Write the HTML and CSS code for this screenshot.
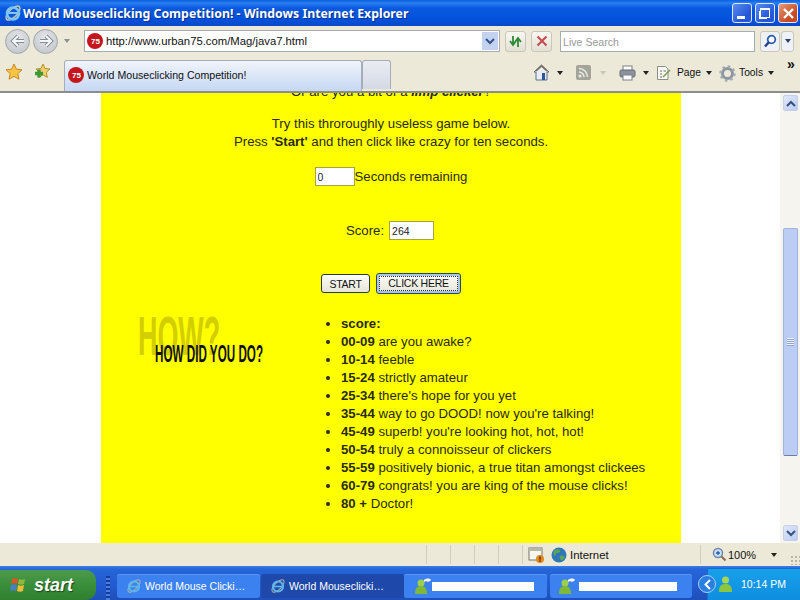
FILE: index.html
```html
<!DOCTYPE html>
<html lang="en">
<head>
    <meta charset="UTF-8">
    <title>World Mouseclicking Competition! - Windows Internet Explorer</title>
    <link rel="stylesheet" href="styles.css">
</head>
<body>
<div class="window">
    <!-- title bar -->
    <div class="titlebar">
        <svg class="ie-logo" width="20" height="20" viewBox="0 0 20 20"><ellipse cx="10" cy="10" rx="9" ry="4" fill="none" stroke="#c9c6a8" stroke-width="1.5" transform="rotate(-45 10 10)"/><circle cx="10" cy="10.500" r="6" fill="none" stroke="#7fc4f2" stroke-width="2.600"/><path d="M5 10h10" stroke="#7fc4f2" stroke-width="2"/></svg>
        <span class="title-text">World Mouseclicking Competition! - Windows Internet Explorer</span>
        <div class="win-buttons">
            <div class="win-btn"><span class="glyph-min"></span></div>
            <div class="win-btn"><span class="glyph-restore"></span></div>
            <div class="win-btn close"><svg width="13" height="13" viewBox="0 0 13 13"><path d="M2 2l9 9M11 2l-9 9" stroke="#fff" stroke-width="2.400"/></svg></div>
        </div>
    </div>

    <!-- address row -->
    <div class="nav-row">
        <div class="nav-circles">
            <div class="nav-circle"><svg width="16" height="14" viewBox="0 0 16 14"><path d="M8 2L3 7l5 5M3 7h11" fill="none" stroke="#868d94" stroke-width="4"/><path d="M8 2L3 7l5 5M3 7h11" fill="none" stroke="#f4f5f6" stroke-width="2"/></svg></div>
            <div class="nav-circle"><svg width="16" height="14" viewBox="0 0 16 14"><path d="M8 2l5 5-5 5M13 7H2" fill="none" stroke="#868d94" stroke-width="4"/><path d="M8 2l5 5-5 5M13 7H2" fill="none" stroke="#f4f5f6" stroke-width="2"/></svg></div>
        </div>
        <span class="arrow grey nav-arrow"></span>
        <div class="address">
            <svg class="favicon" width="16" height="16" viewBox="0 0 16 16"><circle cx="8" cy="8" r="8" fill="#c4161c"/><text x="8.500" y="11" text-anchor="middle" class="favicon-text">75</text></svg>
            <span class="url">http://www.urban75.com/Mag/java7.html</span>
            <div class="address-drop"><svg width="10" height="7" viewBox="0 0 10 7"><path d="M1 1l4 4 4-4" fill="none" stroke="#34508f" stroke-width="2"/></svg></div>
        </div>
        <div class="tool-btn first"><svg width="15" height="13" viewBox="0 0 15 13"><path d="M5 1v8M2 6l3 4 3-4M10 12V4M7 7l3-4 3 4" fill="none" stroke="#2d8a35" stroke-width="1.800"/></svg></div>
        <div class="tool-btn"><svg width="12" height="12" viewBox="0 0 12 12"><path d="M1.500 1.500l9 9M10.500 1.500l-9 9" stroke="#c8494a" stroke-width="2"/></svg></div>
        <div class="search-box">Live Search</div>
        <div class="tool-btn search-go"><svg width="14" height="14" viewBox="0 0 14 14"><circle cx="8.500" cy="5.500" r="3.800" fill="#fff" stroke="#2a5bb0" stroke-width="1.800"/><path d="M6 8l-4 4.500" stroke="#1d3f8c" stroke-width="2.400"/></svg></div>
        <div class="tool-btn search-drop"><span class="arrow navy"></span></div>
    </div>

    <!-- tab row -->
    <div class="tab-row">
        <svg class="star" width="18" height="18" viewBox="0 0 18 18"><path d="M9 1l2.400 5.200 5.600.6-4.200 3.800 1.200 5.600L9 13.400l-5 2.800 1.200-5.600L1 6.800l5.600-.6z" fill="#f6c445" stroke="#c98a1e"/></svg>
        <svg class="star-add" width="18" height="18" viewBox="0 0 18 18"><path d="M10 1l2 4.500 5 .5-3.700 3.300 1 5-4.300-2.500-4.300 2.500 1-5L3 6l5-.5z" fill="#f1cf6c" stroke="#b98f2a"/><path d="M6 6.500v8M2 10.500h8" stroke="#3c9a35" stroke-width="3.400"/></svg>
        <div class="tab active">
            <svg width="16" height="16" viewBox="0 0 16 16"><circle cx="8" cy="8" r="8" fill="#c4161c"/><text x="8.500" y="11" text-anchor="middle" class="favicon-text">75</text></svg>
            <span>World Mouseclicking Competition!</span>
        </div>
        <div class="tab blank"></div>
        <div class="commands">
            <svg class="cmd-home" width="17" height="17" viewBox="0 0 17 17"><path d="M8.500 1L1 8h2v8h11V8h2z" fill="#e8edf4" stroke="#5d6f8c"/><path d="M3 7l5.500-5L14 7" fill="none" stroke="#7a6a55" stroke-width="1.500"/><rect x="9" y="9" width="3" height="7" fill="#2f5597"/></svg>
            <span class="arrow cmd-arrow-home"></span>
            <svg class="cmd-rss" width="15" height="15" viewBox="0 0 15 15"><rect width="15" height="15" rx="2" fill="#a3a59c"/><circle cx="4" cy="11" r="1.500" fill="#ecebe2"/><path d="M3 7a5 5 0 0 1 5 5M3 3.500a8.500 8.500 0 0 1 8.500 8.500" fill="none" stroke="#ecebe2" stroke-width="1.500"/></svg>
            <span class="arrow pale cmd-arrow-rss"></span>
            <svg class="cmd-print" width="17" height="16" viewBox="0 0 17 16"><rect x="4" y="1" width="9" height="5" fill="#fff" stroke="#78808c"/><rect x="1" y="5" width="15" height="7" rx="1.500" fill="#8d939c" stroke="#646a74"/><rect x="4" y="10" width="9" height="5" fill="#fff" stroke="#78808c"/></svg>
            <span class="arrow cmd-arrow-print"></span>
            <svg class="cmd-page" width="16" height="16" viewBox="0 0 16 16"><path d="M1.500 1.500h8l2.500 2.500v10.500H1.500z" fill="#f8f8f2" stroke="#8b8f88"/><path d="M4 6h2M4 9h2M4 12h2M7.500 6H10" stroke="#6a6f6a"/><path d="M7 12l7-7" stroke="#7f9a57" stroke-width="1.600"/></svg>
            <span class="cmd-label">Page</span>
            <span class="arrow cmd-arrow-page"></span>
            <svg class="cmd-gear" width="17" height="17" viewBox="0 0 17 17"><circle cx="8.500" cy="8.500" r="5" fill="none" stroke="#8d95a0" stroke-width="3"/><circle cx="8.500" cy="8.500" r="7" fill="none" stroke="#a5abb4" stroke-width="2.500" stroke-dasharray="2.500 3"/></svg>
            <span class="cmd-label">Tools</span>
            <span class="arrow cmd-arrow-tools"></span>
            <span class="chevrons">»</span>
        </div>
    </div>

    <!-- page -->
    <div class="viewport">
        <div class="page-bg">
            <div class="page">
                <p class="intro">Or are you a bit of a <b><i>limp clicker</i></b>?</p>
                <p class="intro">Try this throroughly useless game below.<br>Press <b>'Start'</b> and then click like crazy for ten seconds.</p>
                <div class="game-row seconds">
                    <input class="field small" type="text" value="0"><span>Seconds remaining</span>
                </div>
                <div class="game-row score">
                    <span>Score:</span><input class="field" type="text" value="264">
                </div>
                <div class="game-row buttons">
                    <button class="btn">START</button>
                    <button class="btn focused"><span>CLICK HERE</span></button>
                </div>
                <div class="results">
                    <div class="how">
                        <span class="how-big">HOW?</span>
                        <span class="how-small">HOW DID YOU DO?</span>
                    </div>
                    <ul class="scores">
                        <li><b>score:</b></li>
                        <li><b>00-09</b> are you awake?</li>
                        <li><b>10-14</b> feeble</li>
                        <li><b>15-24</b> strictly amateur</li>
                        <li><b>25-34</b> there's hope for you yet</li>
                        <li><b>35-44</b> way to go DOOD! now you're talking!</li>
                        <li><b>45-49</b> superb! you're looking hot, hot, hot!</li>
                        <li><b>50-54</b> truly a connoisseur of clickers</li>
                        <li><b>55-59</b> positively bionic, a true titan amongst clickees</li>
                        <li><b>60-79</b> congrats! you are king of the mouse clicks!</li>
                        <li><b>80 +</b> Doctor!</li>
                    </ul>
                </div>
            </div>
        </div>
        <div class="scrollbar">
            <div class="sb-btn"><svg width="10" height="7" viewBox="0 0 10 7"><path d="M1 6l4-4 4 4" fill="none" stroke="#3b4f81" stroke-width="2"/></svg></div>
            <div class="sb-track top"></div>
            <div class="sb-thumb"><span class="sb-grip"></span></div>
            <div class="sb-track bottom"></div>
            <div class="sb-btn"><svg width="10" height="7" viewBox="0 0 10 7"><path d="M1 1l4 4 4-4" fill="none" stroke="#3b4f81" stroke-width="2"/></svg></div>
        </div>
    </div>

    <!-- status bar -->
    <div class="statusbar">
        <div class="status-cell wide"></div>
        <div class="status-cell"></div>
        <div class="status-cell"></div>
        <div class="status-cell"></div>
        <div class="status-cell zone">
            <svg width="16" height="16" viewBox="0 0 16 16"><rect x="1" y="1" width="13" height="12" fill="#f7f6ef" stroke="#77756a"/><rect x="1" y="1" width="13" height="3" fill="#b8b6a8"/><circle cx="12" cy="12" r="4" fill="#e08a1e"/><rect x="11.300" y="9.500" width="1.400" height="3.200" fill="#622"/><rect x="11.300" y="13.300" width="1.400" height="1.400" fill="#622"/></svg>
            <svg class="globe" width="16" height="16" viewBox="0 0 16 16"><circle cx="8" cy="8" r="7.500" fill="#2f78b8"/><path d="M3 4c2-2 5-2 6-1s-1 3-3 3-1 3-2 3-2-3-1-5zM9 9c2-1 4 0 5 1-1 2-3 4-4 3s-2-3-1-4z" fill="#5ba55a"/></svg>
            <span class="zone-label">Internet</span>
        </div>
        <div class="status-cell zoom">
            <svg width="15" height="15" viewBox="0 0 15 15"><circle cx="6" cy="6" r="4.500" fill="#cfe0f5" stroke="#6c86ad" stroke-width="1.500"/><path d="M4 6h4M6 4v4" stroke="#2a5bb0" stroke-width="1.300"/><path d="M9.500 9.500l4 4" stroke="#8a6a4a" stroke-width="2"/></svg>
            <span class="zoom-label">100%</span>
            <span class="arrow zoom-arrow"></span>
        </div>
        <span class="status-grip"></span>
    </div>

    <!-- taskbar -->
    <div class="taskbar">
        <div class="start">
            <svg width="18" height="18" viewBox="0 0 18 18"><path d="M2 3c2-1 4-1 6 0l-1 5c-2-1-4-1-6 0z" fill="#d8562a"/><path d="M9 3c2 1 4 1 6 0l-1 5c-2 1-4 1-6 0z" fill="#8cb83c"/><path d="M1 9c2-1 4-1 6 0l-1 6c-2-1-4-1-6 0z" fill="#4a7fc4"/><path d="M8 9c2 1 4 1 6 0l-1 6c-2 1-4 1-6 0z" fill="#edbd36"/></svg>
            <span>start</span>
        </div>
        <div class="task-grip"></div>
        <div class="task light">
            <svg class="task-ie" width="16" height="16" viewBox="0 0 16 16"><ellipse cx="8" cy="8" rx="8" ry="3.400" fill="none" stroke="#b5b29a" transform="rotate(-45 8 8)"/><circle cx="8" cy="8.500" r="5" fill="none" stroke="#5cb6ee" stroke-width="2.200"/><path d="M4 8.500h8" stroke="#5cb6ee" stroke-width="1.700"/></svg>
            <span>World Mouse Clicki…</span>
        </div>
        <div class="task pressed">
            <svg class="task-ie" width="16" height="16" viewBox="0 0 16 16"><ellipse cx="8" cy="8" rx="8" ry="3.400" fill="none" stroke="#b5b29a" transform="rotate(-45 8 8)"/><circle cx="8" cy="8.500" r="5" fill="none" stroke="#5cb6ee" stroke-width="2.200"/><path d="M4 8.500h8" stroke="#5cb6ee" stroke-width="1.700"/></svg>
            <span>World Mouseclicki…</span>
        </div>
        <div class="task light chat first-chat">
            <svg width="18" height="18" viewBox="0 0 18 18"><circle cx="7" cy="6" r="3.500" fill="#9ccf4a"/><path d="M1 17c0-7 3-8 6-8s6 1 6 8z" fill="#7eb83a"/><path d="M10 3c2-2 6-2 7 0-1 2-4 2-5 1l-2 1z" fill="#f4f4f4"/></svg>
            <span class="blanked one"></span>
        </div>
        <div class="task light chat second-chat">
            <svg width="18" height="18" viewBox="0 0 18 18"><circle cx="7" cy="6" r="3.500" fill="#9ccf4a"/><path d="M1 17c0-7 3-8 6-8s6 1 6 8z" fill="#7eb83a"/><path d="M10 3c2-2 6-2 7 0-1 2-4 2-5 1l-2 1z" fill="#f4f4f4"/></svg>
            <span class="blanked two"></span>
        </div>
        <div class="tray">
            <div class="tray-arrow"><svg width="9" height="11" viewBox="0 0 9 11"><path d="M7 1L2.500 5.500 7 10" fill="none" stroke="#fff" stroke-width="2"/></svg></div>
            <svg width="15" height="18" viewBox="0 0 15 18"><circle cx="7.500" cy="5" r="3.500" fill="#a8d652"/><path d="M1 17c0-7 3-8 6.500-8s6.500 1 6.500 8z" fill="#8cc63f"/></svg>
            <span class="clock">10:14 PM</span>
        </div>
    </div>
</div>
</body>
</html>
```

FILE: styles.css
```css
* { box-sizing: border-box; }
html, body { margin: 0; padding: 0; overflow: hidden; }
body { font-family: "Liberation Sans", Arial, sans-serif; }
.window { width: 800px; height: 600px; display: flex; flex-direction: column; background: #ece9d8; overflow: hidden; }

/* title bar */
.titlebar { height: 26px; display: flex; align-items: center; padding: 0 2px 0 3px; background: linear-gradient(#0a5fe0 0%, #2a80f0 12%, #0a5ae0 30%, #0452dc 75%, #0a48c8 100%); }
.ie-logo { flex: none; }
.title-text { font: bold 12.300px "Noto Sans", "Liberation Sans", sans-serif; color: #fff; text-shadow: 1px 1px 1px #0a2f90; white-space: nowrap; }
.win-buttons { margin-left: auto; display: flex; gap: 3px; }
.win-btn { width: 20px; height: 20px; border: 1px solid #dfe8fa; border-radius: 3px; background: linear-gradient(135deg, #5a8cf0, #2458d8 70%); display: flex; align-items: center; justify-content: center; }
.win-btn.close { background: linear-gradient(135deg, #e89a78, #c84a22 70%); }
.glyph-min { width: 8px; height: 3px; background: #fff; margin-top: 8px; margin-right: 2px; }
.glyph-restore { width: 10px; height: 10px; border: 1px solid #fff; border-top-width: 2px; box-shadow: -2px 2px 0 -1px #fff; }

/* nav row */
.nav-row { height: 30px; display: flex; align-items: center; background: #ece9d8; padding-left: 5px; }
.nav-circles { display: flex; width: 53px; height: 25px; gap: 3px; flex: none; }
.nav-circle { width: 25px; height: 25px; border-radius: 50%; border: 1px solid #a0a6ac; background: radial-gradient(circle at 50% 35%, #e6e8ea, #bcc1c6); display: flex; align-items: center; justify-content: center; }
.arrow { display: inline-block; width: 0; height: 0; border-left: 3.500px solid transparent; border-right: 3.500px solid transparent; border-top: 4px solid #222; flex: none; }
.arrow.grey { border-top-color: #8d8f90; }
.arrow.pale { border-top-color: #c8c6b8; }
.arrow.navy { border-top-color: #2c3c70; }
.nav-arrow { margin-left: 6px; }
.address { width: 416px; height: 22px; margin-left: 14px; border: 1px solid #a5acb2; background: #fff; display: flex; align-items: center; padding-left: 2px; flex: none; }
.favicon { flex: none; }
.favicon-text { font: bold 8px "Liberation Sans", sans-serif; fill: #fff; }
.url { margin-left: 3px; font: 11.300px "Liberation Sans", sans-serif; color: #111; white-space: nowrap; }
.address-drop { margin-left: auto; margin-right: 1px; width: 16px; height: 18px; background: #c3d2ee; display: flex; align-items: center; justify-content: center; }
.tool-btn { width: 21px; height: 21px; margin-left: 5px; border: 1px solid #c9c7ba; border-radius: 3px; background: linear-gradient(#f8f7f2, #e2e0d4); display: flex; align-items: center; justify-content: center; flex: none; }
.search-box { width: 195px; height: 21px; margin-left: 8px; border: 1px solid #a5acb2; background: #fff; color: #999; font: 10.600px "Liberation Sans", sans-serif; line-height: 21px; padding-left: 2px; flex: none; }
.search-go { margin-left: 5px; width: 20px; background: #eef1f6; }
.search-drop { margin-left: 1px; width: 13px; background: #eef1f6; }

/* tab row */
.tab-row { height: 36px; display: flex; align-items: flex-end; background: #ece9d8; border-bottom: 1px solid #8b8d90; padding-left: 64px; position: relative; }
.star { position: absolute; left: 5px; top: 7px; }
.star-add { position: absolute; left: 33px; top: 7px; }
.tab { height: 31px; border: 1px solid #a7adb8; border-bottom: none; border-radius: 3px 3px 0 0; flex: none; }
.tab.active { width: 298px; background: linear-gradient(#f0f4fa, #c6d8f5); display: flex; align-items: center; padding: 0 0 3px 3px; gap: 3px; font: 10.600px "Liberation Sans", sans-serif; color: #111; }
.tab.blank { width: 29px; height: 29px; margin-bottom: 2px; background: linear-gradient(#e9ecf2 0%, #d4d9e6 100%); }
.commands { position: absolute; left: 533px; top: 0; width: 267px; height: 35px; font: 10.300px "Liberation Sans", sans-serif; color: #111; }
.commands > * { position: absolute; }
.cmd-home { left: 0; top: 8px; }
.cmd-arrow-home { left: 24px; top: 15px; }
.cmd-rss { left: 43px; top: 9px; }
.cmd-arrow-rss { left: 67px; top: 15px; }
.cmd-print { left: 86px; top: 9px; }
.cmd-arrow-print { left: 110px; top: 15px; }
.cmd-page { left: 123px; top: 9px; }
.cmd-label { top: 11px; }
.cmd-page + .cmd-label { left: 144px; }
.cmd-arrow-page { left: 173px; top: 15px; }
.cmd-gear { left: 186px; top: 9px; }
.cmd-gear + .cmd-label { left: 206px; }
.cmd-arrow-tools { left: 235px; top: 15px; }
.chevrons { left: 254px; top: 0; font: bold 14px "Liberation Sans", sans-serif; }

/* page area */
.viewport { height: 451px; display: flex; background: #fff; overflow: hidden; border-top: 1px solid #8b8d90; }
.page-bg { width: 780px; flex: none; padding-left: 101px; overflow: hidden; }
.page { display: flow-root; width: 580px; height: 100%; background: #ff0; color: #2a2a10; font-size: 13.200px; line-height: 18px; text-align: center; }
.intro { margin: 0 0 14px; }
.intro:first-child { margin-top: -10px; }
.game-row { display: flex; justify-content: center; align-items: center; }
.seconds { margin-top: 16px; height: 19px; }
.seconds span { padding-top: 1px; }
.score { margin-top: 35px; height: 19px; gap: 5px; padding-right: 2px; }
.buttons { margin-top: 33px; height: 21px; gap: 6px; }
.field { width: 45px; height: 19px; border: 1px solid #a8a53c; background: #fff; font: 10.500px "Liberation Sans", sans-serif; color: #222; padding: 0 2px; margin: 0; }
.field.small { width: 40px; }
.btn { height: 19px; width: 49px; padding: 0; border: 1px solid #2b3a3a; border-radius: 3px; background: linear-gradient(#fdfdf8, #e6e5d8); font: 10.500px "Liberation Sans", sans-serif; letter-spacing: -0.250px; color: #111; }
.btn.focused { width: 85px; height: 21px; border-color: #2c4a50; box-shadow: inset 0 0 0 2px #a8c4ea; }
.btn.focused span { display: block; margin: 2px; line-height: 15px; outline: 1px dotted #333; outline-offset: -1px; }
.results { display: flex; align-items: flex-start; margin-top: 18px; text-align: left; padding-left: 37px; }
.how { position: relative; width: 125px; height: 53px; flex: none; }
.how-big { position: absolute; left: 0; top: -4px; font: bold 56px "Liberation Sans", sans-serif; line-height: 56px; color: #d2ce00; transform: scaleX(0.48); transform-origin: 0 0; white-space: nowrap; }
.how-small { position: absolute; left: 17px; top: 30px; font: bold 24px "Liberation Sans", sans-serif; line-height: 24px; color: #111; transform: scaleX(0.486); transform-origin: 0 0; white-space: nowrap; }
.scores { margin: 0 0 0 78px; padding: 3px 0 0; }

/* scrollbar */
.scrollbar { width: 20px; flex: none; padding: 2px 2px 2px 3px; background: #f5f4ee; display: flex; flex-direction: column; align-items: stretch; }
.sb-btn { height: 16px; background: linear-gradient(135deg, #dfe7fa, #bccdf2); border: 1px solid #c5d0e8; border-radius: 2px; display: flex; align-items: center; justify-content: center; flex: none; }
.sb-track { flex: none; }
.sb-track.top { height: 117px; }
.sb-thumb { height: 228px; background: #bccdf3; border: 1px solid #9fb3df; border-bottom-color: #6d7fa8; border-radius: 2px; display: flex; align-items: center; justify-content: center; flex: none; }
.sb-grip { width: 7px; height: 8px; background: repeating-linear-gradient(#eef3fd 0 1px, #8ea3cf 1px 2px); }
.sb-track.bottom { flex: 1; }

/* status bar */
.statusbar { height: 23px; display: flex; background: #ece9d8; font: 11.400px "Liberation Sans", sans-serif; color: #111; padding-left: 426px; align-items: center; }
.status-cell { height: 19px; width: 24px; border-left: 1px solid #d0cebe; flex: none; display: flex; align-items: center; }
.status-cell.zone { width: 178px; padding-left: 5px; }
.globe { margin-left: 7px; }
.zone-label { margin-left: 3px; }
.status-cell.zoom { width: 88px; padding-left: 11px; }
.zoom-label { margin-left: 1px; font-size: 11px; }
.zoom-arrow { margin-left: 15px; }
.status-grip { width: 10px; height: 10px; margin: 10px 0 0 auto; background: radial-gradient(circle, #b8b5a4 1px, transparent 1.500px) 0 0 / 4px 4px; }

/* taskbar */
.taskbar { height: 34px; display: flex; align-items: flex-end; background: linear-gradient(#3b7fe6 0, #2566d8 3px, #2259d0 60%, #1f4fb8 100%); color: #fff; font: 10.500px "Liberation Sans", sans-serif; }
.start { width: 96px; height: 30px; border-radius: 0 10px 10px 0; background: linear-gradient(#4c9a4c, #3a8f3a 50%, #2f7f2f); display: flex; align-items: center; padding-left: 10px; gap: 6px; font: italic bold 18px "Liberation Sans", sans-serif; text-shadow: 1px 1px 1px #1a4a1a; flex: none; }
.task-grip { width: 4px; height: 24px; margin-left: 10px; flex: none; background: repeating-linear-gradient(#163a9c 0 2px, #4c7ee0 2px 4px); }
.task { width: 143px; height: 24px; margin-bottom: 2px; border-radius: 3px; display: flex; align-items: center; padding-left: 9px; gap: 3px; flex: none; white-space: nowrap; }
.task-grip + .task { margin-left: 7px; }
.task.light { background: #3c81f0; box-shadow: inset 0 1px 0 #5c95f2; }
.task.pressed { background: #1e48aa; margin-left: 1px; }
.task.chat { padding-left: 10px; gap: 0; }
.task.second-chat { width: 142px; margin-left: 3px; padding-left: 8px; gap: 3px; }
.blanked { height: 9px; background: #fff; }
.blanked.one { width: 102px; }
.blanked.two { width: 98px; }
.tray { flex: 1; height: 32px; margin-left: 15px; background: linear-gradient(#18a0ea, #0f8ee0); box-shadow: inset 1px 1px 0 #1a6ad0; display: flex; align-items: center; gap: 2px; }
.tray-arrow { width: 18px; height: 18px; margin-left: -9px; flex: none; border-radius: 50%; background: #2a7fe0; border: 1px solid #a8d0f8; display: flex; align-items: center; justify-content: center; }
.clock { margin-left: 6px; }
```
